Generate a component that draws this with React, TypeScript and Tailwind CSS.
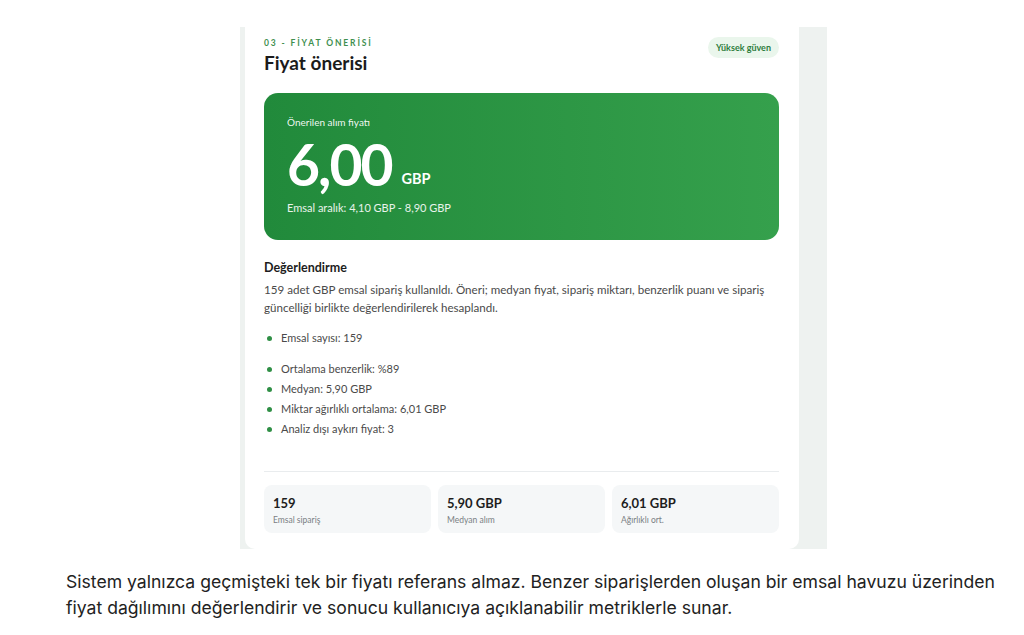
export default function App() {
  const bullets = [
    { text: 'Emsal sayısı: 159', gap: false },
    { text: 'Ortalama benzerlik: %89', gap: true },
    { text: 'Medyan: 5,90 GBP', gap: false },
    { text: 'Miktar ağırlıklı ortalama: 6,01 GBP', gap: false },
    { text: 'Analiz dışı aykırı fiyat: 3', gap: false },
  ];

  const stats = [
    { value: '159', label: 'Emsal sipariş' },
    { value: '5,90 GBP', label: 'Medyan alım' },
    { value: '6,01 GBP', label: 'Ağırlıklı ort.' },
  ];

  return (
    <div className="w-[1024px] h-[635px] bg-white overflow-hidden" style={{ fontFamily: 'Lato, "Open Sans", sans-serif' }}>
      <div className="pt-[27px] pl-[240px]">
        <div className="w-[587px] h-[522px] bg-[#eef2f0] pl-[5px] pr-[28px] flex">
          <div className="flex-1 bg-white rounded-b-[10px] pl-[19px] pr-[20px] pt-[10px]">
            <div className="flex items-start justify-between">
              <div>
                <div className="text-[8.5px] font-bold tracking-[0.22em] text-[#3f8f4f] leading-[12px]">03 - FİYAT ÖNERİSİ</div>
                <h1 className="text-[19px] font-bold text-[#1b1b1b] leading-[24px] mt-[2px]">Fiyat önerisi</h1>
              </div>
              <span className="rounded-full bg-[#eaf6ec] px-[8px] h-[21px] flex items-center text-[9px] font-bold text-[#2e7d3c]">Yüksek güven</span>
            </div>

            <div className="mt-[18px] h-[147px] rounded-[14px] bg-gradient-to-r from-[#218a3b] to-[#35a04c] px-[23px] pt-[22px] text-white">
              <div className="text-[10px] leading-[14px] text-white/95">Önerilen alım fiyatı</div>
              <div className="flex items-end mt-[10px] h-[50px]">
                <span className="text-[57px] font-bold leading-[50px] tracking-[-0.035em]">6,00</span>
                <span className="text-[14.5px] font-bold ml-[10px] mb-[2px] leading-[16px]">GBP</span>
              </div>
              <div className="text-[11px] leading-[14px] mt-[12px] text-white/90">Emsal aralık: 4,10 GBP - 8,90 GBP</div>
            </div>

            <div className="mt-[20px]">
              <div className="text-[12.5px] font-bold text-[#1d1d1d] leading-[16px]">Değerlendirme</div>
              <p className="text-[11.6px] leading-[18px] text-[#4a4a4a] mt-[5px]">
                159 adet GBP emsal sipariş kullanıldı. Öneri; medyan fiyat, sipariş miktarı, benzerlik puanı ve sipariş güncelliği birlikte değerlendirilerek hesaplandı.
              </p>
              <ul className="mt-[11px]">
                {bullets.map((b) => (
                  <li key={b.text} className={`flex items-center h-[20px] text-[11px] text-[#4a4a4a] ${b.gap ? 'mt-[11px]' : ''}`}>
                    <span className="w-[5px] h-[5px] rounded-full bg-[#2f8f45] ml-[3px] mr-[9px]"></span>
                    {b.text}
                  </li>
                ))}
              </ul>
            </div>

            <div className="mt-[32px] border-t border-[#e9ecee] pt-[13px] grid grid-cols-3 gap-[7px]">
              {stats.map((s) => (
                <div key={s.label} className="h-[48px] rounded-[8px] bg-[#f5f7f8] px-[9px] pt-[10px]">
                  <div className="text-[13px] font-bold text-[#1e1e1e] leading-[16px]">{s.value}</div>
                  <div className="text-[8.5px] text-[#7a7f84] leading-[12px] mt-[3px]">{s.label}</div>
                </div>
              ))}
            </div>
          </div>
        </div>
      </div>

      <div className="pl-[66px] pt-[20px] text-[17.6px] leading-[26px] text-[#222]" style={{ fontFamily: 'Inter, sans-serif' }}>
        <p>Sistem yalnızca geçmişteki tek bir fiyatı referans almaz. Benzer siparişlerden oluşan bir emsal havuzu üzerinden</p>
        <p>fiyat dağılımını değerlendirir ve sonucu kullanıcıya açıklanabilir metriklerle sunar.</p>
      </div>
    </div>
  );
}
